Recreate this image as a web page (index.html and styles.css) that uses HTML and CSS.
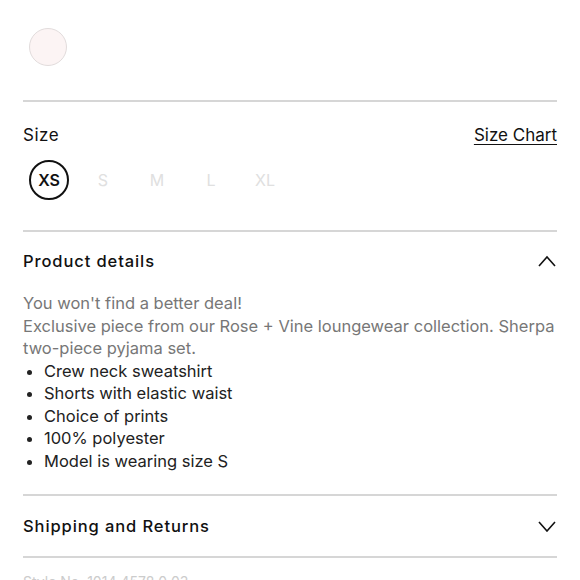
FILE: index.html
```html
<!DOCTYPE html>
<html lang="en">
<head>
  <meta charset="UTF-8">
  <title>Product</title>
  <link rel="stylesheet" href="styles.css">
</head>
<body>
  <div class="page">
    <div class="swatches">
      <span class="swatch"></span>
    </div>

    <div class="size-block">
      <div class="size-head">
        <span class="label">Size</span>
        <a href="#" class="chart-link">Size Chart</a>
      </div>
      <div class="sizes">
        <span class="size active">XS</span>
        <span class="size">S</span>
        <span class="size">M</span>
        <span class="size">L</span>
        <span class="size">XL</span>
      </div>
    </div>

    <div class="section open">
      <div class="section-head">
        <h3>Product details</h3>
        <svg class="chev" width="18" height="12" viewBox="0 0 18 12">
          <polyline points="1,11 9,2 17,11" fill="none" stroke="#111" stroke-width="1.6"/>
        </svg>
      </div>
      <div class="section-body">
        <p>You won't find a better deal!<br>Exclusive piece from our Rose + Vine loungewear collection. Sherpa two-piece pyjama set.</p>
        <ul>
          <li>Crew neck sweatshirt</li>
          <li>Shorts with elastic waist</li>
          <li>Choice of prints</li>
          <li>100% polyester</li>
          <li>Model is wearing size S</li>
        </ul>
      </div>
    </div>

    <div class="section">
      <div class="section-head">
        <h3>Shipping and Returns</h3>
        <svg class="chev" width="18" height="12" viewBox="0 0 18 12">
          <polyline points="1,2 9,11 17,2" fill="none" stroke="#111" stroke-width="1.6"/>
        </svg>
      </div>
    </div>

    <div class="footnote">Style No. 1014 4578 0 03</div>
  </div>
</body>
</html>
```

FILE: styles.css
```css
body {
  margin: 0;
  font-family: Inter, "Noto Sans", sans-serif;
  color: #111;
  background: #fff;
}

.page {
  padding: 0 23px;
}

.swatches {
  padding: 28px 6px 34px;
  border-bottom: 2px solid #d6d6d6;
}

.swatch {
  display: block;
  width: 36px;
  height: 36px;
  border-radius: 50%;
  background: #fcf4f4;
  border: 1px solid #e2dcdc;
}

.size-block {
  padding: 23px 0 30px;
  border-bottom: 2px solid #d6d6d6;
}

.size-head {
  display: flex;
  justify-content: space-between;
  align-items: center;
  font-size: 17px;
}

.label {
  letter-spacing: 0.5px;
}

.chart-link {
  color: #111;
  text-decoration: underline;
  text-underline-offset: 3px;
}

.sizes {
  display: flex;
  gap: 14px;
  margin-top: 15px;
  padding-left: 6px;
}

.size {
  width: 40px;
  height: 40px;
  display: flex;
  align-items: center;
  justify-content: center;
  font-size: 16px;
  color: #e0e0e0;
  box-sizing: border-box;
}

.size.active {
  border: 2px solid #111;
  border-radius: 50%;
  color: #111;
  font-weight: 600;
}

.section {
  border-bottom: 2px solid #d6d6d6;
}

.section-head {
  display: flex;
  justify-content: space-between;
  align-items: center;
  height: 60px;
}

.section.open .section-head {
  height: 58px;
}

.section-head h3 {
  margin: 0;
  font-size: 16.5px;
  font-weight: 500;
  letter-spacing: 0.9px;
}

.chev {
  margin-right: 1px;
}

.section-body {
  padding: 2px 0 22px;
  font-size: 16.5px;
  line-height: 22.5px;
}

.section-body p {
  margin: 0;
  color: #777;
}

.section-body ul {
  margin: 0;
  padding-left: 21px;
  color: #222;
}

.footnote {
  padding-top: 15px;
  font-size: 14px;
  color: #ccc;
}
```
